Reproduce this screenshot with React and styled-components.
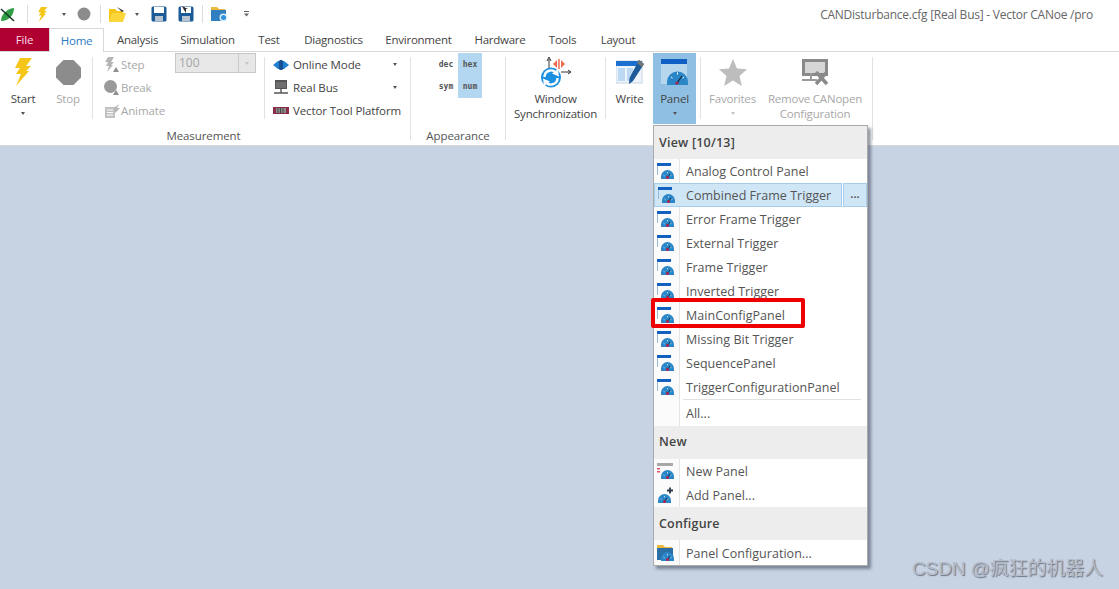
import React from 'react';
import styled, { createGlobalStyle } from 'styled-components';

const Global = createGlobalStyle`
  html, body { margin: 0; padding: 0; background: #c7d2e3; overflow: hidden; }
  body { font-family: "Open Sans", "Noto Sans", "Liberation Sans", sans-serif; font-size: 11.5px; color: #444; }
`;

const Page = styled.div`
  position: relative;
  width: 1119px;
  height: 589px;
  background: #c7d2e3;
  overflow: hidden;
`;

const Top = styled.div`
  background: #fff;
  border-bottom: 1px solid #d8d8d8;
`;

const Qat = styled.div`
  display: flex;
  align-items: center;
  height: 28px;
`;

const QatSlot = styled.span`
  display: flex;
  align-items: center;
  justify-content: center;
  flex: none;
  width: ${({ $w }) => $w}px;
  margin-left: ${({ $ml }) => $ml || 0}px;
`;

const QatSep = styled.span`
  width: 1px;
  height: 18px;
  flex: none;
  background: #dcdcdc;
  margin-left: ${({ $ml }) => $ml || 0}px;
`;

const Title = styled.div`
  margin-left: auto;
  padding-right: 26px;
  color: #666;
  font-size: 12px;
  letter-spacing: -0.24px;
`;

const Caret = styled.span`
  display: inline-block;
  width: 0;
  height: 0;
  border-left: 2px solid transparent;
  border-right: 2px solid transparent;
  border-top: 3px solid ${({ $off }) => ($off ? '#c4c4c4' : '#555')};
`;

const Tabs = styled.div`
  display: flex;
  height: 23px;
  border-bottom: 1px solid #d8d8d8;
  box-sizing: content-box;
`;

const FileTab = styled.div`
  width: 49px;
  height: 23px;
  background: #b00032;
  color: #fbdfe6;
  display: flex;
  align-items: center;
  justify-content: center;
  letter-spacing: -0.2px;
`;

const Tab = styled.div`
  box-sizing: border-box;
  height: ${({ $active }) => ($active ? '24px' : '23px')};
  width: ${({ $w }) => $w}px;
  display: flex;
  align-items: center;
  justify-content: center;
  color: ${({ $active }) => ($active ? '#2b7cc0' : '#444')};
  background: #fff;
  letter-spacing: -0.25px;
  ${({ $active }) => $active && 'border: 1px solid #d8d8d8; border-bottom: none;'}
`;

const Ribbon = styled.div`
  display: flex;
  height: 93px;
`;

const Group = styled.div`
  width: ${({ $w }) => $w}px;
  flex: none;
  box-sizing: border-box;
  display: flex;
  flex-direction: column;
  position: relative;
  padding-top: 1px;
  &::after {
    content: "";
    position: absolute;
    right: 0;
    top: 5px;
    bottom: 5px;
    width: 1px;
    background: #e2e2e2;
  }
`;

const GroupBody = styled.div`
  display: flex;
  height: 76px;
  flex: none;
`;

const GroupLabel = styled.div`
  text-align: center;
  line-height: 14px;
  height: 14px;
  color: #555;
  padding-right: ${({ $pr }) => $pr || 0}px;
  letter-spacing: -0.1px;
`;

const VSep = styled.span`
  flex: none;
  width: 1px;
  height: 62px;
  background: #e2e2e2;
  margin-top: 4px;
  margin-left: ${({ $ml }) => $ml || 0}px;
`;

const LargeButton = styled.div`
  flex: none;
  width: ${({ $w }) => $w}px;
  height: 71px;
  display: flex;
  flex-direction: column;
  align-items: center;
  background: ${({ $active }) => ($active ? '#8fc0e4' : 'transparent')};
  color: ${({ $off }) => ($off ? '#a8a8a8' : '#444')};
  letter-spacing: -0.2px;
`;

const LargeIcon = styled.div`
  height: 38px;
  flex: none;
  display: flex;
  align-items: center;
  justify-content: center;
`;

const LargeLabel = styled.div`
  line-height: 15px;
  text-align: center;
  white-space: nowrap;
`;

const CaretRow = styled.div`
  height: 15px;
  display: flex;
  align-items: center;
`;

const SmallColumn = styled.div`
  flex: none;
  width: ${({ $w }) => $w}px;
  margin-left: ${({ $ml }) => $ml}px;
`;

const SmallRow = styled.div`
  height: 23px;
  display: flex;
  align-items: center;
  gap: ${({ $gap }) => $gap}px;
  white-space: nowrap;
  color: ${({ $off }) => ($off ? '#a8a8a8' : '#444')};
  letter-spacing: -0.1px;
`;

const SmallIcon = styled.span`
  width: 16px;
  height: 16px;
  flex: none;
  display: flex;
  align-items: center;
  justify-content: center;
`;

const RowCaret = styled.span`
  margin-left: auto;
  margin-right: 6px;
  display: flex;
`;

const Combo = styled.div`
  box-sizing: border-box;
  width: 81px;
  height: 20px;
  flex: none;
  display: flex;
  background: #e7e7e7;
  border: 1px solid #c8c8c8;
  color: #a6a6a6;
`;

const ComboValue = styled.div`
  flex: 1;
  padding-left: 3px;
  line-height: 17px;
  font-size: 12px;
`;

const ComboDrop = styled.div`
  width: 16px;
  border-left: 1px solid #c8c8c8;
  display: flex;
  align-items: center;
  justify-content: center;
`;

const FormatGrid = styled.div`
  display: grid;
  grid-template-columns: 24px 24px;
  grid-auto-rows: 22.5px;
  margin-left: 23px;
`;

const FormatCell = styled.div`
  display: flex;
  align-items: center;
  justify-content: center;
  font-family: "DejaVu Sans Mono", "Liberation Mono", monospace;
  font-size: 8px;
  font-weight: 700;
  color: #555;
  background: ${({ $on }) => ($on ? '#b3d7f0' : 'transparent')};
`;

const Menu = styled.div`
  position: absolute;
  left: 653px;
  top: 125px;
  width: 215px;
  box-sizing: border-box;
  background: #fff;
  border: 1px solid #ababab;
  box-shadow: 3px 3px 3px rgba(60, 70, 90, 0.55);
  font-size: 12.5px;
  color: #555;
`;

const MenuHeader = styled.div`
  height: ${({ $h }) => $h}px;
  background: #ededed;
  padding-left: 5px;
  padding-top: ${({ $pt }) => $pt || 0}px;
  box-sizing: border-box;
  font-weight: 600;
  color: #444;
  line-height: 18px;
  letter-spacing: 0.2px;
`;

const MenuRow = styled.div`
  display: flex;
  height: ${({ $h }) => $h || 24}px;
  position: relative;
`;

const Gutter = styled.div`
  width: 26px;
  flex: none;
  box-sizing: border-box;
  border-right: 1px solid #e4e4e4;
  background: #fbfbfb;
  display: flex;
  align-items: center;
  justify-content: center;
  padding-right: 1px;
`;

const MenuText = styled.div`
  flex: 1;
  line-height: ${({ $lh }) => $lh || 25}px;
  padding-left: 6px;
  white-space: nowrap;
  letter-spacing: 0.03px;
`;

const HotRow = styled.div`
  display: flex;
  gap: 1px;
  height: 24px;
`;

const HotMain = styled.div`
  flex: 1;
  display: flex;
  box-sizing: border-box;
  background: #cfe6f7;
  border: 1px solid #a3cdea;
  ${Gutter} {
    width: 25px;
    background: transparent;
    border-right: none;
  }
  ${MenuText} {
    line-height: 23px;
    padding-left: 6px;
  }
`;

const HotMore = styled.div`
  width: 24px;
  flex: none;
  box-sizing: border-box;
  background: #cfe6f7;
  border: 1px solid #a3cdea;
  display: flex;
  align-items: center;
  justify-content: center;
  font-size: 11px;
  line-height: 12px;
  padding-bottom: 2px;
  font-weight: 700;
`;

const MenuDivider = styled.div`
  position: absolute;
  left: 29px;
  right: 6px;
  top: 0;
  height: 1px;
  background: #e2e2e2;
`;

const Callout = styled.div`
  position: absolute;
  left: 651px;
  top: 298px;
  width: 154px;
  height: 30px;
  box-sizing: border-box;
  border: 4px solid #ee0000;
  border-radius: 2px;
`;

const Watermark = styled.div`
  position: absolute;
  left: 912px;
  top: 557px;
  font-family: "Liberation Sans", "Noto Sans CJK SC", sans-serif;
  font-size: 19px;
  letter-spacing: -0.12px;
  line-height: 24px;
  white-space: nowrap;
  color: #b4bcc9;
  text-shadow: 1px 1px 1px #6d7480;
`;

const boltD = 'M7 0 L19 0 L13 8 L18 8 L13 13 L16 13 L3 28 L8 16 L3 16 L7 10 L2 10 Z';

const Bolt = ({ w = 20, h = 28, color = '#f5c518' }) => (
  <svg width={w} height={h} viewBox="0 0 20 28"><path d={boltD} fill={color} /></svg>
);

const Octagon = () => (
  <svg width="25" height="25" viewBox="0 0 25 25">
    <path d="M7.5 0 H17.5 L25 7.5 V17.5 L17.5 25 H7.5 L0 17.5 V7.5 Z" fill="#8c8c8c" />
  </svg>
);

const AppLogo = () => (
  <svg width="15" height="15" viewBox="0 0 15 15">
    <path d="M1 14 C1 8 6 2 14 1 C14 8 9 14 1 14 Z" fill="#2f9e44" />
    <path d="M1 2 L14 14" stroke="#1d3b2a" strokeWidth="1.6" />
  </svg>
);

const Disk = ({ arrow }) => (
  <svg width="16" height="16" viewBox="0 0 16 16">
    <rect x="0.5" y="0.5" width="15" height="15" rx="1.5" fill="#1c5a98" />
    <rect x="3" y="1" width="10" height="6" fill="#fff" />
    <rect x="4" y="10" width="8" height="5" fill="#b8c4d0" />
    {arrow && <path d="M4 0 L10 3 L8 3 L8 7 L6 4 Z" fill="#2b2b2b" />}
  </svg>
);

const YellowFolder = () => (
  <svg width="17" height="15" viewBox="0 0 17 15">
    <path d="M0 2 H6 L8 4 H14 V15 H0 Z" fill="#f6c51c" />
    <path d="M8 0 L15 4 L13 5 L11 3 Z" fill="#3a3a3a" />
    <path d="M3 6 H17 L14 15 H0 Z" fill="#fbd63a" />
  </svg>
);

const BlueFolder = () => (
  <svg width="17" height="16" viewBox="0 0 17 16">
    <path d="M0 1 H6 L8 3 H14 V5 H0 Z" fill="#e8b93a" />
    <rect x="0" y="4" width="15" height="11" fill="#2f7fc1" />
    <circle cx="12.5" cy="11.5" r="4" fill="#d8ecfa" />
    <circle cx="12.5" cy="11.5" r="2.5" fill="#2f92dc" />
  </svg>
);

const QatMore = () => (
  <svg width="7" height="6" viewBox="0 0 7 6">
    <rect x="1" y="0" width="5" height="1" fill="#666" />
    <path d="M1 2.5 H6 L3.5 5.5 Z" fill="#666" />
  </svg>
);

const StepIcon = () => (
  <svg width="16" height="16" viewBox="0 0 16 16">
    <path d="M4 0 L10 0 L7 5 L10 5 L7 8 L9 8 L3 15 L5 9 L2 9 L4 5 L1 5 Z" fill="#b5b5b5" />
    <path d="M9 15 L12 10 L15 15 Z" fill="#8f8f8f" />
  </svg>
);

const BreakIcon = () => (
  <svg width="16" height="16" viewBox="0 0 16 16">
    <circle cx="6.5" cy="6.5" r="6.5" fill="#9a9a9a" />
    <path d="M9 15 L12 10 L15 15 Z" fill="#8f8f8f" />
  </svg>
);

const AnimateIcon = () => (
  <svg width="16" height="14" viewBox="0 0 16 14">
    <rect x="1" y="3" width="10" height="11" fill="#c2c2c2" />
    <path d="M3 6 H9 M3 8.5 H9 M3 11 H9" stroke="#fff" />
    <path d="M10 4 L15 0 L13 4 L16 4 L11 9 Z" fill="#b5b5b5" />
  </svg>
);

const OnlineIcon = () => (
  <svg width="16" height="10" viewBox="0 0 16 10">
    <path d="M0 5 L5 1 H11 L16 5 L11 9 H5 Z" fill="#1f7fd0" />
    <rect x="6" y="0" width="4" height="10" rx="1.5" fill="#174f92" />
  </svg>
);

const BusIcon = () => (
  <svg width="14" height="15" viewBox="0 0 14 15">
    <rect x="1" y="0" width="12" height="9" fill="#555" />
    <path d="M3 2 V8 M5 2 V8 M7 2 V8 M9 2 V8 M11 2 V8" stroke="#8a8a8a" />
    <path d="M7 9 V13 M0 13 H14" stroke="#555" strokeWidth="1.4" />
  </svg>
);

const ToolIcon = () => (
  <svg width="16" height="7" viewBox="0 0 16 7">
    <rect width="16" height="7" fill="#8d2a45" />
    <rect x="3" y="1" width="10" height="5" fill="#8c8c8c" />
    <path d="M5 1 V6 M7.5 1 V6 M10 1 V6" stroke="#444" />
  </svg>
);

const SyncIcon = () => (
  <svg width="30" height="31" viewBox="0 0 30 31">
    <path d="M8 11 V2 M6 4 L8 0 L10 4" stroke="#333" strokeWidth="1" fill="none" />
    <path d="M20 15 H29 M27 13 L30 15 L27 17" stroke="#333" strokeWidth="1" fill="none" />
    <path d="M12 7 L16 3 V11 Z M24 7 L20 3 V11 Z" fill="#ee6a50" />
    <rect x="17.2" y="2" width="1.5" height="10" fill="#ee6a50" />
    <circle cx="10" cy="20.5" r="10" fill="#1b8fe0" />
    <path d="M3.5 20 A6.5 6.5 0 0 1 15.5 16.5 M16.5 21 A6.5 6.5 0 0 1 4.5 24.5" stroke="#fff" strokeWidth="2.4" fill="none" />
    <path d="M17 12 L18 19.5 L11 16.5 Z M3 29 L2 21.5 L9 24.5 Z" fill="#fff" />
  </svg>
);

const WriteIcon = () => (
  <svg width="28" height="26" viewBox="0 0 28 26">
    <rect x="0" y="2" width="26" height="22" fill="#eef4fb" stroke="#c8d4e2" />
    <rect x="0" y="2" width="26" height="5" fill="#1d6fd0" />
    <path d="M2 9 H9 V22 H2 Z M11 9 H17 V22 H11 Z" fill="#bcd8f2" />
    <path d="M23 1 L28 5 L17 22 L13 25 L13.5 19 Z" fill="#1c5a98" />
    <path d="M23 1 L28 5 L26 8 L21 4 Z" fill="#777" />
  </svg>
);

const PanelBig = () => (
  <svg width="27" height="27" viewBox="0 0 27 27">
    <rect x="0" y="0" width="26" height="25" fill="#fff" opacity="0.35" />
    <rect x="0" y="0" width="26" height="5" fill="#0f5fc4" />
    <path d="M6 26 V23 A10.5 10.5 0 0 1 27 23 V26 Z" fill="#2b86c8" />
    <path d="M16 24 L21 17" stroke="#123" strokeWidth="1.2" />
    <circle cx="16" cy="24" r="1.6" fill="#b0204a" />
    <path d="M10 18 L11.5 19 M16.5 13.5 V15.5 M23 18 L21.5 19" stroke="#fff" />
  </svg>
);

const Gauge = ({ x = 5 }) => (
  <g transform={`translate(${x} 7)`}>
    <path d="M0 9 V6.5 A6.5 6.5 0 0 1 13 6.5 V9 Z" fill="#2b86c8" />
    <path d="M2.5 5 L3.6 5.8 M6.5 2 V3.4 M10.5 5 L9.4 5.8" stroke="#cfe8fa" strokeWidth="0.8" />
    <path d="M6.5 7.5 L9 4" stroke="#123" strokeWidth="0.9" />
    <circle cx="6.5" cy="7.5" r="1.5" fill="#b0204a" />
  </g>
);

const PanelMini = () => (
  <svg width="18" height="16" viewBox="0 0 18 16">
    <rect x="0" y="0" width="14" height="3" fill="#1261c0" />
    <rect x="0" y="3" width="1" height="9" fill="#9ab8d6" />
    <Gauge x={4} />
  </svg>
);

const NewPanelIcon = () => (
  <svg width="18" height="16" viewBox="0 0 18 16">
    <rect x="0" y="0" width="16" height="3" fill="#a8a8a8" />
    <rect x="0" y="5" width="3" height="1.5" fill="#e05070" />
    <rect x="0" y="8" width="3" height="1.5" fill="#e05070" />
    <Gauge x={4} />
  </svg>
);

const AddPanelIcon = () => (
  <svg width="18" height="16" viewBox="0 0 18 16">
    <path d="M10 3.5 H16 M13 0.5 V6.5" stroke="#2b3a4a" strokeWidth="1.8" />
    <Gauge x={1} />
  </svg>
);

const ConfigIcon = () => (
  <svg width="18" height="16" viewBox="0 0 18 16">
    <path d="M0 0 H6 L8 2 H15 V4 H0 Z" fill="#e8b93a" />
    <rect x="0" y="3" width="16" height="12" fill="#2a6fa8" />
    <Gauge x={4} />
  </svg>
);

const StarIcon = () => (
  <svg width="28" height="27" viewBox="0 0 28 27">
    <path d="M14 0 L18 9.5 L28 10.3 L20.5 17 L22.8 27 L14 21.6 L5.2 27 L7.5 17 L0 10.3 L10 9.5 Z" fill="#bdbdbd" />
  </svg>
);

const RemoveIcon = () => (
  <svg width="28" height="27" viewBox="0 0 28 27">
    <rect x="1" y="0" width="26" height="17" fill="#8a8a8a" />
    <rect x="4" y="3" width="20" height="11" fill="#d6d6d6" />
    <path d="M10 14 V20 M1 21 H16" stroke="#9a9a9a" strokeWidth="2" />
    <path d="M15 13 L26 25 M26 13 L15 25" stroke="#8a8a8a" strokeWidth="3.4" />
  </svg>
);

const panelItems = ['Analog Control Panel', 'Combined Frame Trigger', 'Error Frame Trigger', 'External Trigger', 'Frame Trigger', 'Inverted Trigger', 'MainConfigPanel', 'Missing Bit Trigger', 'SequencePanel', 'TriggerConfigurationPanel'];

const tabs = [['Home', 55, true], ['Analysis', 67], ['Simulation', 73], ['Test', 50], ['Diagnostics', 79], ['Environment', 91], ['Hardware', 72], ['Tools', 53], ['Layout', 58]];

const Large = ({ w, icon, lines, caret, off, active }) => (
  <LargeButton $w={w} $off={off} $active={active}>
    <LargeIcon>{icon}</LargeIcon>
    {lines.map(l => <LargeLabel key={l}>{l}</LargeLabel>)}
    {caret && <CaretRow><Caret $off={off} /></CaretRow>}
  </LargeButton>
);

const PanelMenu = () => (
  <Menu>
    <MenuHeader $h={33} $pt={8}>View [10/13]</MenuHeader>
    {panelItems.map(name => name === 'Combined Frame Trigger' ? (
      <HotRow key={name}>
        <HotMain>
          <Gutter><PanelMini /></Gutter>
          <MenuText>{name}</MenuText>
        </HotMain>
        <HotMore>...</HotMore>
      </HotRow>
    ) : (
      <MenuRow key={name}>
        <Gutter><PanelMini /></Gutter>
        <MenuText>{name}</MenuText>
      </MenuRow>
    ))}
    <MenuRow $h={27}>
      <MenuDivider />
      <Gutter />
      <MenuText $lh={29}>All...</MenuText>
    </MenuRow>
    <MenuHeader $h={33} $pt={7}>New</MenuHeader>
    <MenuRow>
      <Gutter><NewPanelIcon /></Gutter>
      <MenuText>New Panel</MenuText>
    </MenuRow>
    <MenuRow>
      <Gutter><AddPanelIcon /></Gutter>
      <MenuText>Add Panel...</MenuText>
    </MenuRow>
    <MenuHeader $h={33} $pt={8}>Configure</MenuHeader>
    <MenuRow $h={25}>
      <Gutter><ConfigIcon /></Gutter>
      <MenuText $lh={27}>Panel Configuration...</MenuText>
    </MenuRow>
  </Menu>
);

export default function App() {
  return (
    <Page>
      <Global />
      <Top>
        <Qat>
          <QatSlot $w={15}><AppLogo /></QatSlot>
          <QatSep $ml={12} />
          <QatSlot $w={11} $ml={9}><Bolt w={11} h={15} /></QatSlot>
          <QatSlot $w={6} $ml={13}><Caret /></QatSlot>
          <QatSlot $w={14} $ml={10}>
            <svg width="14" height="14" viewBox="0 0 14 14"><circle cx="7" cy="7" r="6.5" fill="#8c8c8c" /></svg>
          </QatSlot>
          <QatSep $ml={9} />
          <QatSlot $w={17} $ml={8}><YellowFolder /></QatSlot>
          <QatSlot $w={6} $ml={8}><Caret /></QatSlot>
          <QatSlot $w={16} $ml={11}><Disk /></QatSlot>
          <QatSlot $w={16} $ml={11}><Disk arrow /></QatSlot>
          <QatSep $ml={8} />
          <QatSlot $w={17} $ml={8}><BlueFolder /></QatSlot>
          <QatSlot $w={7} $ml={15}><QatMore /></QatSlot>
          <Title>CANDisturbance.cfg [Real Bus] - Vector CANoe /pro</Title>
        </Qat>
        <Tabs>
          <FileTab>File</FileTab>
          {tabs.map(([name, w, active]) => <Tab key={name} $w={w} $active={active}>{name}</Tab>)}
        </Tabs>
        <Ribbon>
          <Group $w={411}>
            <GroupBody>
              <Large w={46} icon={<Bolt />} lines={['Start']} caret />
              <Large w={44} off icon={<Octagon />} lines={['Stop']} />
              <VSep $ml={2} />
              <SmallColumn $w={71} $ml={11}>
                <SmallRow $gap={1} $off><SmallIcon><StepIcon /></SmallIcon>Step</SmallRow>
                <SmallRow $gap={1} $off><SmallIcon><BreakIcon /></SmallIcon>Break</SmallRow>
                <SmallRow $gap={1} $off><SmallIcon><AnimateIcon /></SmallIcon>Animate</SmallRow>
              </SmallColumn>
              <Combo>
                <ComboValue>100</ComboValue>
                <ComboDrop><Caret $off /></ComboDrop>
              </Combo>
              <VSep $ml={8} />
              <SmallColumn $w={130} $ml={8}>
                <SmallRow $gap={4}><SmallIcon><OnlineIcon /></SmallIcon>Online Mode<RowCaret><Caret /></RowCaret></SmallRow>
                <SmallRow $gap={4}><SmallIcon><BusIcon /></SmallIcon>Real Bus<RowCaret><Caret /></RowCaret></SmallRow>
                <SmallRow $gap={4}><SmallIcon><ToolIcon /></SmallIcon>Vector Tool Platform</SmallRow>
              </SmallColumn>
            </GroupBody>
            <GroupLabel $pr={4}>Measurement</GroupLabel>
          </Group>
          <Group $w={95}>
            <GroupBody>
              <FormatGrid>
                <FormatCell>dec</FormatCell>
                <FormatCell $on>hex</FormatCell>
                <FormatCell>sym</FormatCell>
                <FormatCell $on>num</FormatCell>
              </FormatGrid>
            </GroupBody>
            <GroupLabel $pr={1}>Appearance</GroupLabel>
          </Group>
          <Group $w={367}>
            <GroupBody>
              <Large w={99} icon={<SyncIcon />} lines={['Window', 'Synchronization']} />
              <VSep />
              <Large w={47} icon={<WriteIcon />} lines={['Write']} />
              <Large w={43} active icon={<PanelBig />} lines={['Panel']} caret />
              <VSep $ml={4} />
              <Large w={63} off icon={<StarIcon />} lines={['Favorites']} caret />
              <Large w={102} off icon={<RemoveIcon />} lines={['Remove CANopen', 'Configuration']} />
            </GroupBody>
          </Group>
        </Ribbon>
      </Top>
      <PanelMenu />
      <Callout />
      <Watermark>CSDN @疯狂的机器人</Watermark>
    </Page>
  );
}
